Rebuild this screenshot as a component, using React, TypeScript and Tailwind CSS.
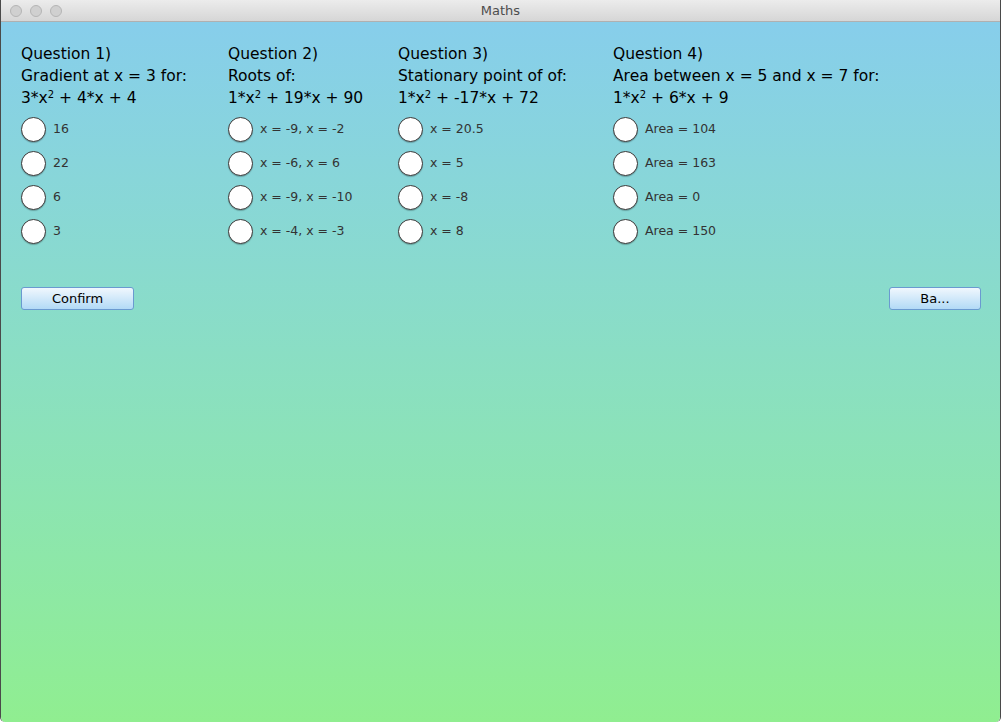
const questions = [
  {
    title: "Question 1)",
    prompt: "Gradient at x = 3 for:",
    expr: ["3*x", " + 4*x + 4"],
    options: ["16", "22", "6", "3"],
    width: "w-[207px]",
  },
  {
    title: "Question 2)",
    prompt: "Roots of:",
    expr: ["1*x", " + 19*x + 90"],
    options: ["x = -9, x = -2", "x = -6, x = 6", "x = -9, x = -10", "x = -4, x = -3"],
    width: "w-[170px]",
  },
  {
    title: "Question 3)",
    prompt: "Stationary point of of:",
    expr: ["1*x", " + -17*x + 72"],
    options: ["x = 20.5", "x = 5", "x = -8", "x = 8"],
    width: "w-[215px]",
  },
  {
    title: "Question 4)",
    prompt: "Area between x = 5 and x = 7 for:",
    expr: ["1*x", " + 6*x + 9"],
    options: ["Area = 104", "Area = 163", "Area = 0", "Area = 150"],
    width: "w-[300px]",
  },
];

function Radio({ label }: { label: string }) {
  return (
    <label className="flex items-center h-[34px] gap-[7px]">
      <span className="w-[25px] h-[25px] rounded-full bg-white border border-[#3a3a3a] shadow-[0_1px_1px_rgba(0,0,0,0.25)]" />
      <span className="text-[12.5px] text-[#333333]">{label}</span>
    </label>
  );
}

function MacButton({ children, className = "" }: { children: React.ReactNode; className?: string }) {
  return (
    <button
      className={`h-[23px] rounded-[3px] border border-[#6a9ad0] bg-gradient-to-b from-[#f0f7fd] to-[#b2daf6] text-[13px] text-black leading-none ${className}`}
    >
      {children}
    </button>
  );
}

export default function App() {
  return (
    <div className="w-[1001px] h-[722px] flex flex-col overflow-hidden font-['DejaVu_Sans',sans-serif] border-x border-[#4a4a4a] rounded-b-[5px]">
      {/* title bar */}
      <div className="h-[22px] shrink-0 relative flex items-center justify-center bg-gradient-to-b from-[#ececec] to-[#d6d6d6] border-b border-[#b0b0b0]">
        <div className="absolute left-[9px] top-[5px] flex gap-[8px]">
          <span className="w-[12px] h-[12px] rounded-full bg-[#d0d0d0] border border-[#b5b5b5]" />
          <span className="w-[12px] h-[12px] rounded-full bg-[#d0d0d0] border border-[#b5b5b5]" />
          <span className="w-[12px] h-[12px] rounded-full bg-[#d0d0d0] border border-[#b5b5b5]" />
        </div>
        <span className="text-[13px] text-[#4d4d4d]">Maths</span>
      </div>

      {/* content */}
      <div className="flex-1 bg-gradient-to-b from-[#87ceeb] to-[#90ee90] pl-[20px] pr-[19px] pt-[21px]">
        <div className="flex">
          {questions.map((q) => (
            <div key={q.title} className={`${q.width} shrink-0`}>
              <div className="text-[15.5px] leading-[22px] text-black">
                <div>{q.title}</div>
                <div>{q.prompt}</div>
                <div>
                  {q.expr[0]}
                  <sup className="text-[10px]">2</sup>
                  {q.expr[1]}
                </div>
              </div>
              <div className="mt-[3px]">
                {q.options.map((o) => (
                  <Radio key={o} label={o} />
                ))}
              </div>
            </div>
          ))}
        </div>
        <div className="flex justify-between mt-[39px]">
          <MacButton className="w-[113px]">Confirm</MacButton>
          <MacButton className="w-[92px]">Ba...</MacButton>
        </div>
      </div>
    </div>
  );
}
